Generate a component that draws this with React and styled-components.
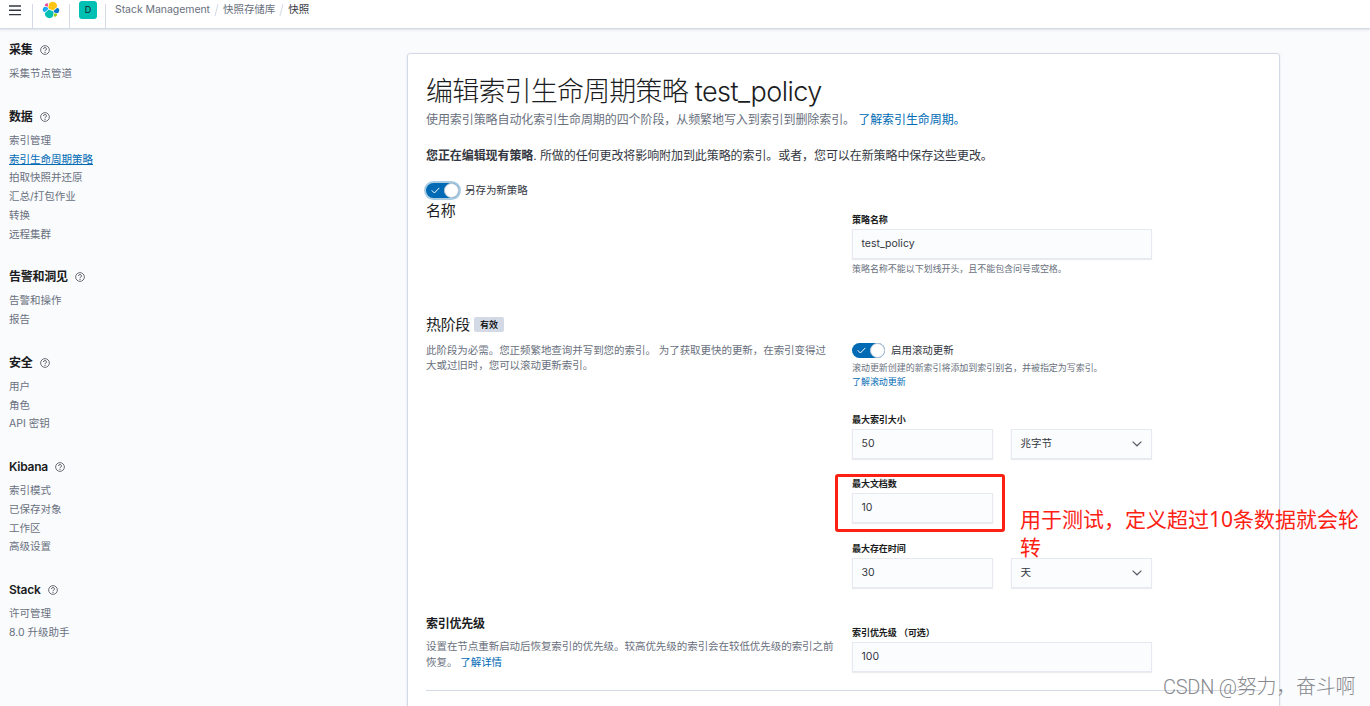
import React from "react";
import styled, { createGlobalStyle } from "styled-components";

const GlobalStyle = createGlobalStyle`
  * {
    box-sizing: border-box;
  }
  body {
    margin: 0;
    height: 706px;
    overflow: hidden;
    background: #fafbfd;
    color: #343741;
    font-family: Inter, "Noto Sans CJK SC", sans-serif;
    font-size: 10.5px;
    letter-spacing: -0.005em;
  }
  h1, h2, h3, p {
    margin: 0;
  }
`;

const Page = styled.div`
  position: relative;
  height: 706px;
  overflow: hidden;
`;

const Header = styled.header`
  display: flex;
  height: 29px;
  background: #fff;
  border-bottom: 1px solid #d3dae6;
  box-shadow: 0 1px 2px rgba(152, 162, 179, 0.3);
`;

const HeaderItem = styled.div`
  width: ${(props) => props.$width}px;
  display: flex;
  align-items: flex-start;
  justify-content: center;
  padding: ${(props) => props.$top}px ${(props) => props.$right || 0}px 0 0;
  background: linear-gradient(#d3dae6, #d3dae6) right bottom / 1px 24px no-repeat;
`;

const Avatar = styled.div`
  width: 18px;
  height: 18px;
  border-radius: 3px;
  background: #00bfb3;
  color: #1a1c21;
  font-size: 9px;
  line-height: 18px;
  text-align: center;
`;

const Breadcrumbs = styled.nav`
  display: flex;
  padding: 1px 0 0 9px;
  line-height: 18px;
  color: #69707d;
`;

const Slash = styled.span`
  width: 1px;
  height: 12px;
  margin: 3px 6px 0;
  background: #d3dae6;
  transform: rotate(15deg);
`;

const Current = styled.span`
  color: #343741;
`;

const Body = styled.div`
  display: flex;
  align-items: flex-start;
`;

const Sidebar = styled.aside`
  width: 407px;
  padding: 12px 0 0 9px;
`;

const NavGroup = styled.div`
  margin-bottom: 24px;
`;

const NavTitle = styled.h2`
  display: flex;
  align-items: center;
  gap: 7px;
  margin-bottom: 6px;
  font-size: 12px;
  font-weight: 600;
  line-height: 18px;
  letter-spacing: -0.02em;
  color: #1a1c21;
`;

const NavLink = styled.div`
  line-height: 18.75px;
  letter-spacing: 0;
  color: ${(props) => (props.$active ? "#006bb4" : "#69707d")};
  text-decoration: ${(props) => (props.$active ? "underline" : "none")};
`;

const Panel = styled.main`
  width: 873px;
  height: 700px;
  margin-top: 24px;
  padding: 23px 18px 0;
  background: #fff;
  border: 1px solid #d3dae6;
  border-radius: 3px;
  box-shadow: 0 1px 3px rgba(152, 162, 179, 0.2);
`;

const Title = styled.h1`
  margin-bottom: 4px;
  font-size: 27px;
  font-weight: 300;
  line-height: 30px;
  letter-spacing: -0.03em;
  color: #1a1c21;
`;

const PolicyName = styled.span`
  letter-spacing: -0.02em;
`;

const Lead = styled.p`
  margin-bottom: 18px;
  font-size: 12px;
  line-height: 18px;
  letter-spacing: -0.007em;
  white-space: nowrap;
  color: ${(props) => (props.$dark ? "#343741" : "#69707d")};
`;

const Link = styled.a`
  color: #006bb4;
`;

const Row = styled.section`
  display: grid;
  grid-template-columns: 408px 408px;
  column-gap: 18px;
  height: ${(props) => props.$height}px;
`;

const Column = styled.div`
  padding-top: ${(props) => props.$top || 0}px;
`;

const PhaseTitle = styled.h2`
  display: flex;
  align-items: center;
  gap: 4px;
  font-size: 15px;
  font-weight: 400;
  line-height: 19px;
  letter-spacing: -0.025em;
  color: #1a1c21;
`;

const SmallTitle = styled.h3`
  font-size: 12px;
  font-weight: 600;
  line-height: 18px;
  letter-spacing: -0.02em;
  color: #1a1c21;
`;

const Badge = styled.span`
  padding: 0 6px;
  height: 15px;
  border-radius: 2px;
  background: #d3dae6;
  font-size: 9px;
  font-weight: 500;
  line-height: 15px;
  letter-spacing: 0;
  color: #000;
`;

const Description = styled.p`
  margin-top: ${(props) => props.$gap}px;
  line-height: 15.75px;
  color: #69707d;
  white-space: nowrap;
`;

const SwitchRow = styled.div`
  display: flex;
  align-items: center;
  height: 15px;
  gap: 6px;
  line-height: 15px;
`;

const Track = styled.span`
  display: flex;
  align-items: center;
  justify-content: space-between;
  width: 33px;
  height: 15px;
  padding-left: 5px;
  border-radius: 8px;
  background: #006bb4;
  box-shadow: ${(props) => (props.$focused ? "0 0 0 2px #a9cce3" : "none")};
`;

const Thumb = styled.span`
  width: 15px;
  height: 15px;
  border: 1px solid #c5cbd6;
  border-radius: 50%;
  background: #fff;
`;

const Field = styled.div`
  height: 64.5px;
`;

const Label = styled.div`
  height: 16px;
  font-size: 9px;
  font-weight: 600;
  line-height: 13.5px;
  color: #1a1c21;
`;

const Controls = styled.div`
  display: flex;
  gap: 18px;
`;

const Control = styled.div`
  display: flex;
  align-items: center;
  justify-content: space-between;
  width: ${(props) => (props.$wide ? 300 : 141)}px;
  height: 30px;
  padding: 0 9px 0 8.5px;
  line-height: 28px;
  letter-spacing: 0;
  background: #fbfcfd;
  border: 1px solid #e6e9f1;
  box-shadow: 0 1px 1px rgba(152, 162, 179, 0.2);
`;

const Help = styled.div`
  padding-top: ${(props) => props.$top}px;
  font-size: 9px;
  line-height: 13.5px;
  color: #69707d;
`;

const Divider = styled.hr`
  margin: 0;
  border: 0;
  height: 1px;
  background: #d3dae6;
`;

const Highlight = styled.div`
  position: absolute;
  left: 835px;
  top: 474px;
  width: 170px;
  height: 58px;
  border: 3px solid #fd2113;
  border-radius: 3px;
`;

const Note = styled.div`
  position: absolute;
  left: 1020px;
  top: 505px;
  width: 345px;
  font-family: "Noto Sans", "Noto Sans CJK SC", sans-serif;
  font-size: 21px;
  line-height: 28px;
  letter-spacing: 0;
  color: #fd2113;
`;

const Watermark = styled.div`
  position: absolute;
  left: 1163px;
  top: 675px;
  font-family: Roboto, "Noto Sans CJK SC", sans-serif;
  font-size: 20px;
  font-weight: 300;
  line-height: 24px;
  letter-spacing: -0.25px;
  white-space: nowrap;
  color: #87898d;
`;

const MenuIcon = () => (
  <svg width="12" height="11" viewBox="0 0 12 11">
    <path d="M0 1h12M0 5.3h12M0 9.6h12" stroke="#343741" strokeWidth="1.4" />
  </svg>
);

const ElasticLogo = () => (
  <svg width="18" height="18" viewBox="0 0 32 32">
    <path fill="#fec514" d="M12.58 13.79l7 3.21 7.07-6.21c.1-.52.15-1.04.15-1.59a7.8 7.8 0 0 0-14.2-4.4l-1.2 6.1z" />
    <path fill="#00bfb3" d="M5.33 21.22c-.1.52-.15 1.04-.15 1.57 0 4.32 3.5 7.83 7.8 7.83 2.6 0 5-1.3 6.5-3.43l1.17-6.09-1.56-2.98-7.03-3.21z" />
    <path fill="#f04e98" d="M5.29 9.07l4.8 1.13 1.05-5.47a3.85 3.85 0 0 0-5.85 4.34" />
    <path fill="#1ba9f5" d="M4.87 10.21a5.4 5.4 0 0 0-3.57 5.05c0 2.18 1.34 4.12 3.36 4.9l6.73-6.1-1.23-2.65z" />
    <path fill="#93c90e" d="M20.87 27.18a3.83 3.83 0 0 0 5.83-4.31l-4.79-1.13z" />
    <path fill="#0077cc" d="M21.85 20.56l5.28 1.24a5.4 5.4 0 0 0 3.57-5.06c0-2.18-1.34-4.12-3.36-4.89l-6.91 6.06z" />
  </svg>
);

const HelpIcon = () => (
  <svg width="10" height="10" viewBox="0 0 16 16" fill="none" stroke="#4a4d57">
    <circle cx="8" cy="8" r="7" strokeWidth="1.3" />
    <path d="M5.7 6.3a2.3 2.2 0 1 1 3.5 1.8C8.4 8.6 8 9 8 9.9" strokeWidth="1.5" />
    <path d="M8 11v1.6" strokeWidth="1.6" />
  </svg>
);

const CheckIcon = () => (
  <svg width="9" height="7" viewBox="0 0 9 7">
    <path d="M0.7 3.3L3.4 6L8.3 0.9" fill="none" stroke="#fff" strokeWidth="1" />
  </svg>
);

const ChevronIcon = () => (
  <svg width="10" height="6" viewBox="0 0 10 6">
    <path d="M0.6 0.6L5 4.8L9.4 0.6" fill="none" stroke="#5a5e69" strokeWidth="1.2" />
  </svg>
);

const Switch = ({ label, focused }) => (
  <SwitchRow>
    <Track $focused={focused}>
      <CheckIcon />
      <Thumb />
    </Track>
    <span>{label}</span>
  </SwitchRow>
);

const FormField = ({ label, value, unit, wide, children }) => (
  <Field>
    <Label>{label}</Label>
    <Controls>
      <Control $wide={wide}>{value}</Control>
      {unit && (
        <Control>
          {unit}
          <ChevronIcon />
        </Control>
      )}
    </Controls>
    {children}
  </Field>
);

const navGroups = [
  { title: "采集", items: ["采集节点管道"] },
  {
    title: "数据",
    items: ["索引管理", "索引生命周期策略", "拍取快照并还原", "汇总/打包作业", "转换", "远程集群"],
  },
  { title: "告警和洞见", items: ["告警和操作", "报告"] },
  { title: "安全", items: ["用户", "角色", "API 密钥"] },
  { title: "Kibana", items: ["索引模式", "已保存对象", "工作区", "高级设置"] },
  { title: "Stack", items: ["许可管理", "8.0 升级助手"] },
];

const App = () => {
  return (
    <Page>
      <GlobalStyle />
      <Header>
        <HeaderItem $width={33} $top={5} $right={3}>
          <MenuIcon />
        </HeaderItem>
        <HeaderItem $width={37} $top={1} $right={1}>
          <ElasticLogo />
        </HeaderItem>
        <HeaderItem $width={36} $top={1}>
          <Avatar>D</Avatar>
        </HeaderItem>
        <Breadcrumbs>
          <span>Stack Management</span>
          <Slash />
          <span>快照存储库</span>
          <Slash />
          <Current>快照</Current>
        </Breadcrumbs>
      </Header>
      <Body>
        <Sidebar>
          {navGroups.map((group) => (
            <NavGroup key={group.title}>
              <NavTitle>
                {group.title}
                <HelpIcon />
              </NavTitle>
              {group.items.map((item) => (
                <NavLink key={item} $active={item === "索引生命周期策略"}>
                  {item}
                </NavLink>
              ))}
            </NavGroup>
          ))}
        </Sidebar>
        <Panel>
          <Title>
            编辑索引生命周期策略 <PolicyName>test_policy</PolicyName>
          </Title>
          <Lead>
            使用索引策略自动化索引生命周期的四个阶段，从频繁地写入到索引到删除索引。{" "}
            <Link>了解索引生命周期。</Link>
          </Lead>
          <Lead $dark>
            <strong>您正在编辑现有策略</strong>. 所做的任何更改将影响附加到此策略的索引。或者，您可以在新策略中保存这些更改。
          </Lead>
          <Switch label="另存为新策略" focused />
          <Row $height={117}>
            <Column $top={3}>
              <PhaseTitle>名称</PhaseTitle>
            </Column>
            <Column $top={15}>
              <FormField label="策略名称" value="test_policy" wide>
                <Help $top={3}>策略名称不能以下划线开头，且不能包含问号或空格。</Help>
              </FormField>
            </Column>
          </Row>
          <Row $height={300}>
            <Column>
              <PhaseTitle>
                热阶段 <Badge>有效</Badge>
              </PhaseTitle>
              <Description $gap={8.5}>
                此阶段为必需。您正频繁地查询并写到您的索引。 为了获取更快的更新，在索引变得过
                <br />
                大或过旧时，您可以滚动更新索引。
              </Description>
            </Column>
            <Column $top={28}>
              <Switch label="启用滚动更新" />
              <Help $top={3}>
                滚动更新创建的新索引将添加到索引别名，并被指定为写索引。
                <br />
                <Link>了解滚动更新</Link>
              </Help>
              <Column $top={24.6}>
                <FormField label="最大索引大小" value="50" unit="兆字节" />
                <FormField label="最大文档数" value="10" />
                <FormField label="最大存在时间" value="30" unit="天" />
              </Column>
            </Column>
          </Row>
          <Row $height={75}>
            <Column>
              <SmallTitle>索引优先级</SmallTitle>
              <Description $gap={6}>
                设置在节点重新启动后恢复索引的优先级。较高优先级的索引会在较低优先级的索引之前
                <br />
                恢复。 <Link>了解详情</Link>
              </Description>
            </Column>
            <Column $top={11}>
              <FormField label="索引优先级 （可选）" value="100" wide />
            </Column>
          </Row>
          <Divider />
        </Panel>
      </Body>
      <Highlight />
      <Note>用于测试，定义超过10条数据就会轮转</Note>
      <Watermark>CSDN @努力，奋斗啊</Watermark>
    </Page>
  );
};

export default App;
